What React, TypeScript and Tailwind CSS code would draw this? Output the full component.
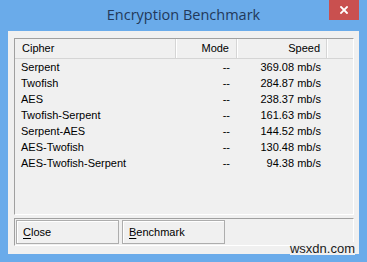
const rows = [
  { cipher: "Serpent", mode: "--", speed: "369.08 mb/s" },
  { cipher: "Twofish", mode: "--", speed: "284.87 mb/s" },
  { cipher: "AES", mode: "--", speed: "238.37 mb/s" },
  { cipher: "Twofish-Serpent", mode: "--", speed: "161.63 mb/s" },
  { cipher: "Serpent-AES", mode: "--", speed: "144.52 mb/s" },
  { cipher: "AES-Twofish", mode: "--", speed: "130.48 mb/s" },
  { cipher: "AES-Twofish-Serpent", mode: "--", speed: "94.38 mb/s" },
];

function HeaderCell({ label, className }: { label: string; className: string }) {
  return (
    <div className={`flex h-full items-center border-r border-r-[#d5d5d5] shadow-[1px_0_0_#ffffff] ${className}`}>
      {label}
    </div>
  );
}

function Button({ hotkey, rest }: { hotkey: string; rest: string }) {
  return (
    <button className="flex h-[24px] w-[103px] items-center border border-[#adadad] bg-[#f0f0f0] pl-[6px] text-left text-[11px] text-[#000] shadow-[inset_1px_1px_0_#ffffff]">
      <span className="underline underline-offset-2">{hotkey}</span>
      {rest}
    </button>
  );
}

export default function App() {
  return (
    <div
      className="relative flex h-[262px] w-[367px] flex-col bg-[#6aabea]"
      style={{ fontFamily: '"Liberation Sans", Arial, sans-serif' }}
    >
      {/* title bar */}
      <div className="relative flex h-[31px] shrink-0 items-center justify-center">
        <span
          className="pb-[1px] text-[14.5px] text-[#22395a]"
          style={{ fontFamily: '"Open Sans", "Noto Sans", sans-serif' }}
        >
          Encryption Benchmark
        </span>
        <div className="absolute right-[8px] top-0 flex h-[20px] w-[30px] items-center justify-center bg-[#c9504f]">
          <svg width="8" height="8" viewBox="0 0 8 8">
            <path d="M1 1L7 7M7 1L1 7" stroke="#ffffff" strokeWidth="1.8" strokeLinecap="square" />
          </svg>
        </div>
      </div>

      {/* client area */}
      <div className="mx-[8px] flex h-[223px] flex-col bg-[#f0f0f0] pl-[6px] pr-[5px] pt-[7px]">
        <div className="flex h-[177px] flex-col border border-t-[#a0a0a0] border-l-[#a0a0a0] border-b-white border-r-white text-[11px] text-[#000]">
          <div className="flex h-[20px] shrink-0 border-b border-b-[#d5d5d5] text-[#000]">
            <HeaderCell label="Cipher" className="w-[161px] pl-[7px]" />
            <HeaderCell label="Mode" className="w-[61px] justify-end pr-[7px]" />
            <HeaderCell label="Speed" className="w-[90px] justify-end pr-[6px]" />
            <div className="flex-1" />
          </div>
          {rows.map((r) => (
            <div key={r.cipher} className="flex h-[16px] items-center">
              <div className="w-[161px] pl-[6px]">{r.cipher}</div>
              <div className="w-[61px] pr-[7px] text-right">{r.mode}</div>
              <div className="w-[90px] pr-[6px] text-right">{r.speed}</div>
            </div>
          ))}
        </div>

        <div className="mt-[3px] flex h-[28px] gap-[3px] border border-t-[#a0a0a0] border-l-[#a0a0a0] border-b-white border-r-white pl-[1px] pt-[1px]">
          <Button hotkey="C" rest="lose" />
          <Button hotkey="B" rest="enchmark" />
        </div>
      </div>

      <span className="absolute bottom-[7px] right-[12px] bg-[#f0f0f0] text-[13px] leading-[13px] text-[#1a1a1a]">
        wsxdn.com
      </span>
    </div>
  );
}
